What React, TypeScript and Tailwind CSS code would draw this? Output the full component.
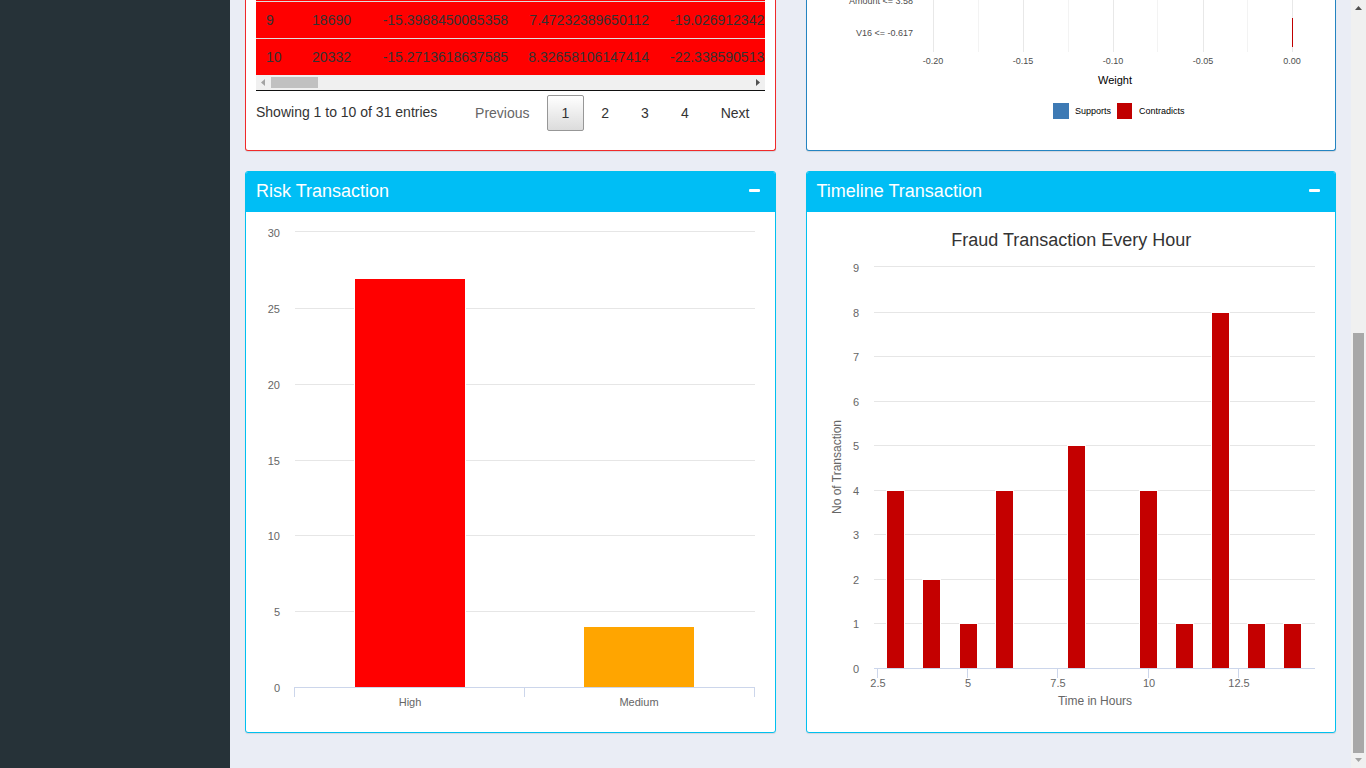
import React from "react";

const rows = [
  { id: "9", time: "18690", v1: "-15.3988450085358", v2: "7.47232389650112", v3: "-19.026912342" },
  { id: "10", time: "20332", v1: "-15.2713618637585", v2: "8.32658106147414", v3: "-22.338590513" },
];

const riskGrid = [
  { value: 30, y: 9, labelY: 15 },
  { value: 25, y: 86, labelY: 91 },
  { value: 20, y: 162, labelY: 167 },
  { value: 15, y: 238, labelY: 243 },
  { value: 10, y: 313, labelY: 318 },
  { value: 5, y: 389, labelY: 394 },
];

const riskBars = [
  { label: "High", x: 99, top: 57, center: 154, className: "fill-[#ff0000]" },
  { label: "Medium", x: 328, top: 405, center: 383, className: "fill-[#ffa500]" },
];

const hourGrid = [
  { value: 9, y: 44, labelY: 50 },
  { value: 8, y: 90, labelY: 95 },
  { value: 7, y: 134, labelY: 139 },
  { value: 6, y: 179, labelY: 184 },
  { value: 5, y: 223, labelY: 228 },
  { value: 4, y: 268, labelY: 273 },
  { value: 3, y: 312, labelY: 317 },
  { value: 2, y: 357, labelY: 362 },
  { value: 1, y: 401, labelY: 406 },
];

const hourBars = [
  { x: 70, top: 269 },
  { x: 106, top: 358 },
  { x: 143, top: 402 },
  { x: 179, top: 269 },
  { x: 251, top: 224 },
  { x: 323, top: 269 },
  { x: 359, top: 402 },
  { x: 395, top: 91 },
  { x: 431, top: 402 },
  { x: 467, top: 402 },
];

const hourTicks = [
  { label: "2.5", x: 60 },
  { label: "5", x: 150 },
  { label: "7.5", x: 240 },
  { label: "10", x: 331 },
  { label: "12.5", x: 421 },
];

const weightTicks = [
  { label: "-0.20", x: 116 },
  { label: "-0.15", x: 206 },
  { label: "-0.10", x: 296 },
  { label: "-0.05", x: 386 },
  { label: "0.00", x: 475 },
];

function RiskChart() {
  return (
    <svg className="block h-[500px] w-full text-[11px]" role="img" aria-label="Risk transaction counts">
      {riskGrid.map((g) => (
        <g key={g.value}>
          <rect x="39" y={g.y} width="460" height="1" className="fill-[#e6e6e6]" />
          <text x="24" y={g.labelY} textAnchor="end" className="fill-[#666666]">{g.value}</text>
        </g>
      ))}
      <text x="24" y="470" textAnchor="end" className="fill-[#666666]">0</text>
      {riskBars.map((b) => (
        <g key={b.label}>
          <rect x={b.x - 1} y={b.top - 1} width="112" height={466 - b.top} className="fill-white" />
          <rect x={b.x} y={b.top} width="110" height={465 - b.top} className={b.className} />
          <text x={b.center} y="484" textAnchor="middle" className="fill-[#666666]">{b.label}</text>
        </g>
      ))}
      <path d="M38 465h461v10h-1v-9h-229v9h-1v-9h-229v9h-1z" className="fill-[#ccd6eb]" />
    </svg>
  );
}

function HourChart() {
  return (
    <svg className="block h-[500px] w-full text-[11px]" role="img" aria-label="Fraud transactions by hour">
      <text x="50%" y="24" textAnchor="middle" className="fill-[#333333] text-[18px]">Fraud Transaction Every Hour</text>
      {hourGrid.map((g) => (
        <g key={g.value}>
          <rect x="57" y={g.y} width="441" height="1" className="fill-[#e6e6e6]" />
          <text x="42" y={g.labelY} textAnchor="end" className="fill-[#666666]">{g.value}</text>
        </g>
      ))}
      <text x="42" y="451" textAnchor="end" className="fill-[#666666]">0</text>
      {hourBars.map((b) => (
        <g key={b.x}>
          <rect x={b.x - 1} y={b.top - 1} width="19" height={447 - b.top} className="fill-white" />
          <rect x={b.x} y={b.top} width="17" height={446 - b.top} className="fill-[#c40000]" />
        </g>
      ))}
      <rect x="57" y="446" width="441" height="1" className="fill-[#ccd6eb]" />
      {hourTicks.map((t) => (
        <g key={t.label}>
          <rect x={t.x} y="447" width="1" height="9" className="fill-[#ccd6eb]" />
          <text x={t.x + 1} y="465" textAnchor="middle" className="fill-[#666666]">{t.label}</text>
        </g>
      ))}
      <text x="278" y="483" textAnchor="middle" className="fill-[#666666] text-[12px]">Time in Hours</text>
      <text transform="translate(24 245) rotate(-90)" textAnchor="middle" className="fill-[#666666] text-[12px]">No of Transaction</text>
    </svg>
  );
}

function WeightChart() {
  return (
    <svg className="block h-[140px] w-full text-[9px]" role="img" aria-label="Feature weights">
      {weightTicks.map((t) => (
        <g key={t.label}>
          <rect x={t.x} y="0" width="1" height="52" className="fill-[#e8e8e8]" />
          <text x={t.x} y="64" textAnchor="middle" className="fill-[#4d4d4d]">{t.label}</text>
        </g>
      ))}
      {[161, 251, 340, 430].map((x) => (
        <rect key={x} x={x} y="0" width="1" height="52" className="fill-[#f3f3f3]" />
      ))}
      <rect x="475" y="18" width="1" height="29" className="fill-[#c00000]" />
      <text x="96" y="4" textAnchor="end" className="fill-[#4d4d4d]">Amount &lt;= 3.58</text>
      <text x="96" y="36" textAnchor="end" className="fill-[#4d4d4d]">V16 &lt;= -0.617</text>
      <text x="298" y="84" textAnchor="middle" className="fill-black text-[11px]">Weight</text>
      <rect x="236" y="103" width="16" height="16" className="fill-[#3e7ab4]" />
      <text x="258" y="114" className="fill-black">Supports</text>
      <rect x="300" y="103" width="15" height="16" className="fill-[#c00000]" />
      <text x="322" y="114" className="fill-black">Contradicts</text>
    </svg>
  );
}

function Box({ title, children }: { title: string; children: React.ReactNode }) {
  return (
    <section className="overflow-hidden rounded-[3px] border border-[#00c0ef] bg-white shadow-[0_1px_1px_rgba(0,0,0,0.1)]">
      <header className="flex h-10 items-center justify-between bg-[#00bef5] px-[10px] pb-[2px] text-white">
        <h3 className="text-[18px] leading-5">{title}</h3>
        <button type="button" aria-label={`Collapse ${title}`} className="px-[5px] pb-[2px]">
          <svg width="11" height="12" className="block" aria-hidden="true">
            <rect y="5" width="11" height="3" rx="1" fill="currentColor" />
          </svg>
        </button>
      </header>
      <div className="p-[10px]">{children}</div>
    </section>
  );
}

const cell = "px-[10px] py-2 whitespace-nowrap";
const pageButton = "rounded-xs border border-transparent px-[14px] py-[7px] leading-5";

export default function App() {
  return (
    <div className="flex min-h-screen bg-[#eaedf5] font-['Liberation_Sans',Arial,sans-serif] text-[14px] leading-5 text-[#333333]">
      <aside className="w-[230px] shrink-0 bg-[#263238]" />

      <main className="min-w-0 flex-1 px-[15px]">
        <div className="grid grid-cols-2 gap-x-[30px] gap-y-5">
          <section className="rounded-b-[3px] border border-t-0 border-[#f02a2a] bg-white px-[10px] pb-[19px] shadow-[0_1px_1px_rgba(0,0,0,0.1)]">
            <div className="border-b border-[#111111]">
              <div className="overflow-hidden border-t border-[#ff0000]">
                <table className="w-full table-fixed border-separate border-spacing-0 bg-[#ff0000]">
                  <colgroup>
                    <col className="w-[46px]" />
                    <col className="w-[59px]" />
                    <col className="w-[157px]" />
                    <col className="w-[141px]" />
                    <col />
                  </colgroup>
                  <tbody>
                    {rows.map((r) => (
                      <tr key={r.id} className="[&>td]:border-t [&>td]:border-[#dddddd]">
                        <td className={cell}>{r.id}</td>
                        <td className={`${cell} text-right`}>{r.time}</td>
                        <td className={`${cell} text-right`}>{r.v1}</td>
                        <td className={`${cell} text-right`}>{r.v2}</td>
                        <td className="py-2 pl-[11px] whitespace-nowrap">{r.v3}</td>
                      </tr>
                    ))}
                  </tbody>
                </table>
              </div>
              <div className="flex h-[15px] items-center bg-[#f0f0f0]">
                <svg width="15" height="15" aria-hidden="true"><path d="M9 4v7L5 7.500z" fill="#a3a3a3" /></svg>
                <div className="h-[11px] w-[47px] bg-[#c1c1c1]" />
                <svg width="15" height="15" className="ml-auto" aria-hidden="true"><path d="M6 4v7l4-3.500z" fill="#505050" /></svg>
              </div>
            </div>
            <div className="flex items-start justify-between pt-1">
              <p className="pt-[7px]">Showing 1 to 10 of 31 entries</p>
              <nav className="flex gap-[2px]" aria-label="Table pages">
                <button type="button" disabled className={`${pageButton} text-[#666666]`}>Previous</button>
                <button type="button" aria-current="page" className="rounded-xs border border-[#979797] bg-linear-to-b from-white to-[#dcdcdc] px-[14px] py-[7px] leading-5">1</button>
                <button type="button" className={pageButton}>2</button>
                <button type="button" className={pageButton}>3</button>
                <button type="button" className={pageButton}>4</button>
                <button type="button" className={pageButton}>Next</button>
              </nav>
            </div>
          </section>

          <section className="rounded-b-[3px] border border-t-0 border-[#2484c1] bg-white px-[10px] pb-[10px] shadow-[0_1px_1px_rgba(0,0,0,0.1)]">
            <WeightChart />
          </section>

          <Box title="Risk Transaction"><RiskChart /></Box>
          <Box title="Timeline Transaction"><HourChart /></Box>
        </div>
      </main>

      <div className="flex w-[15px] shrink-0 flex-col items-center bg-[#f0f0f0]" aria-hidden="true">
        <svg width="15" height="15" className="shrink-0"><path d="M4 10h7L7.500 6z" fill="#505050" /></svg>
        <div className="flex-1" />
        <div className="h-[420px] w-[11px] bg-[#a8a8a8]" />
        <svg width="15" height="15" className="shrink-0"><path d="M4 5h7l-3.500 4z" fill="#a3a3a3" /></svg>
      </div>
    </div>
  );
}
